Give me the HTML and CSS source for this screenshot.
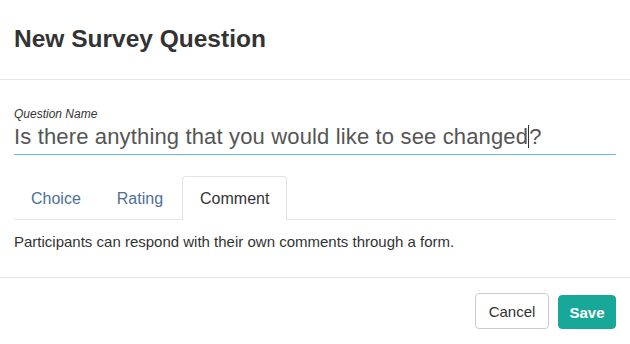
FILE: index.html
```html
<!DOCTYPE html>
<html>
<head>
<meta charset="utf-8">
<link rel="stylesheet" href="styles.css">
</head>
<body>
<div class="modal">
  <div class="modal-header">
    <h1 class="title">New Survey Question</h1>
  </div>
  <div class="modal-body">
    <label class="field-label">Question Name</label>
    <div class="field-input"><span>Is there anything that you would like to see changed</span><span class="caret"></span><span>?</span></div>
    <div class="tabs">
      <div class="tab">Choice</div>
      <div class="tab">Rating</div>
      <div class="tab active">Comment</div>
    </div>
    <p class="desc">Participants can respond with their own comments through a form.</p>
  </div>
  <div class="modal-footer">
    <button class="btn btn-default">Cancel</button>
    <button class="btn btn-primary">Save</button>
  </div>
</div>
</body>
</html>
```
FILE: styles.css
```css
html, body {
  margin: 0;
  padding: 0;
  background: #fff;
}
body {
  font-family: "Liberation Sans", Arial, sans-serif;
  color: #333;
}
.modal {
  width: 630px;
  height: 344px;
  display: flex;
  flex-direction: column;
}
.modal-header {
  height: 80px;
  box-sizing: border-box;
  border-bottom: 1px solid #e5e5e5;
  padding: 0 14px;
  display: flex;
  align-items: center;
}
.title {
  margin: 0;
  font-size: 24.5px;
  font-weight: bold;
  color: #333;
  line-height: 28px;
  margin-top: -1px;
}
.modal-body {
  padding: 27px 14px 0 14px;
  height: 198px;
  box-sizing: border-box;
  border-bottom: 1px solid #e5e5e5;
}
.field-label {
  display: block;
  font-size: 12px;
  font-style: italic;
  line-height: 14px;
  color: #333;
}
.field-input {
  margin-top: 3px;
  font-size: 22px;
  letter-spacing: 0.15px;
  line-height: 25px;
  color: #555;
  border-bottom: 1px solid #66b5ee;
  padding-bottom: 5px;
  display: flex;
  align-items: center;
}
.caret {
  display: inline-block;
  width: 1px;
  height: 23px;
  background: #333;
}
.tabs {
  margin-top: 21px;
  display: flex;
  border-bottom: 1px solid #e3e3e3;
  height: 44px;
  box-sizing: border-box;
}
.tab {
  font-size: 16px;
  color: #4c6f96;
  padding: 0 16px;
  line-height: 43px;
  border: 1px solid transparent;
  border-bottom: none;
  border-radius: 4px 4px 0 0;
  margin-right: 2px;
}
.tab.active {
  color: #333;
  border-color: #e3e3e3;
  background: #fff;
  margin-bottom: -1px;
  height: 44px;
  box-sizing: border-box;
  padding: 0 17px;
}
.desc {
  margin: 13px 0 0 0;
  font-size: 15px;
  line-height: 17px;
  color: #333;
}
.modal-footer {
  display: flex;
  justify-content: flex-end;
  align-items: flex-end;
  gap: 9px;
  padding: 15px 14px 0 14px;
}
.btn {
  font-family: "Liberation Sans", Arial, sans-serif;
  font-size: 15px;
  border-radius: 4px;
  cursor: pointer;
  padding: 0;
}
.btn-default {
  background: #fff;
  color: #333;
  border: 1px solid #ccc;
  height: 36px;
  width: 74px;
}
.btn-primary {
  background: #17a89a;
  color: #fff;
  border: 1px solid #17a89a;
  font-weight: bold;
  height: 34px;
  width: 58px;
}
```
